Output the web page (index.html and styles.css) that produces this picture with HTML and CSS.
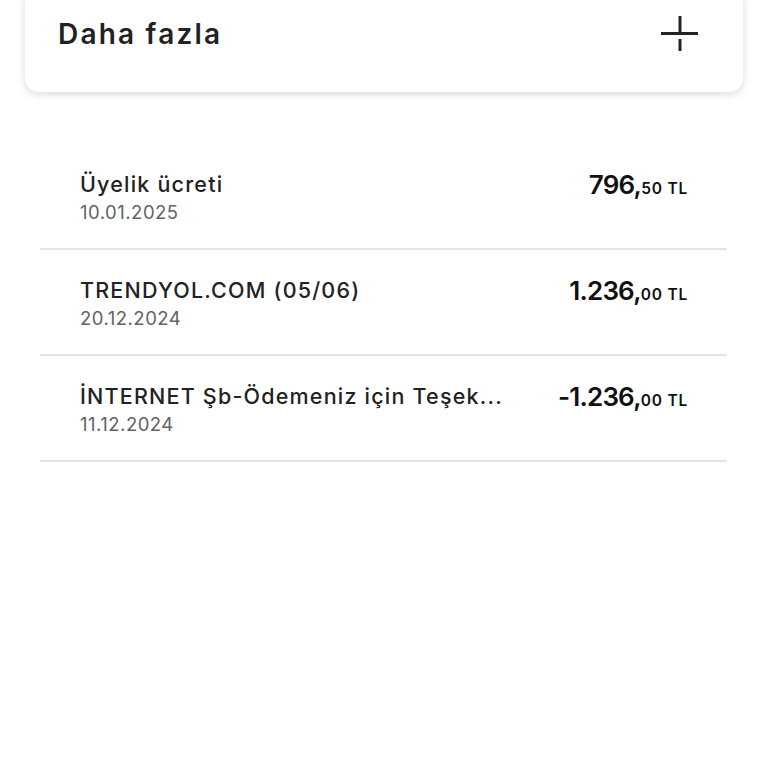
FILE: index.html
```html
<!DOCTYPE html>
<html lang="tr">
<head>
<meta charset="utf-8">
<link rel="stylesheet" href="styles.css">
</head>
<body>
<div class="card">
  <span class="card-title">Daha fazla</span>
  <svg class="plus" width="40" height="40" viewBox="0 0 40 40">
    <path d="M20 0 V16" stroke="#222" stroke-width="3"/>
    <path d="M1 17.5 H38" stroke="#222" stroke-width="3.2"/>
    <path d="M20 23 V35" stroke="#222" stroke-width="3"/>
  </svg>
</div>
<ul class="list">
  <li class="row">
    <div class="info">
      <div class="title">Üyelik ücreti</div>
      <div class="date">10.01.2025</div>
    </div>
    <div class="amount"><span class="int">796,</span><span class="dec">50 TL</span></div>
  </li>
  <li class="row">
    <div class="info">
      <div class="title">TRENDYOL.COM (05/06)</div>
      <div class="date">20.12.2024</div>
    </div>
    <div class="amount"><span class="int">1.236,</span><span class="dec">00 TL</span></div>
  </li>
  <li class="row">
    <div class="info">
      <div class="title">İNTERNET Şb-Ödemeniz için Teşek...</div>
      <div class="date">11.12.2024</div>
    </div>
    <div class="amount"><span class="int">-1.236,</span><span class="dec">00 TL</span></div>
  </li>
</ul>
</body>
</html>
```
FILE: styles.css
```css
html, body {
  margin: 0;
  padding: 0;
  background: #fff;
  font-family: Inter, "Noto Sans", sans-serif;
  color: #1e1e1e;
}
.card {
  margin: -20px 25px 0;
  height: 112px;
  box-sizing: border-box;
  padding: 20px 43px 24px 33px;
  background: #fff;
  border-radius: 14px;
  box-shadow: 0 2px 8px rgba(0, 0, 0, 0.16);
  display: flex;
  align-items: center;
  justify-content: space-between;
}
.card-title {
  font-size: 28px;
  font-weight: 600;
  letter-spacing: 2.2px;
  color: #222;
}
.plus {
  display: block;
  margin-top: 3px;
}
.list {
  list-style: none;
  margin: 52px 41px 0 40px;
  padding: 0;
}
.row {
  height: 106px;
  box-sizing: border-box;
  border-bottom: 2px solid #e4e4e4;
  display: flex;
  align-items: center;
  justify-content: space-between;
  padding: 2px 39px 0 40px;
}
.title {
  font-size: 21.5px;
  font-weight: 500;
  letter-spacing: 1.2px;
  color: #222;
  line-height: 27px;
}
.date {
  font-size: 18.5px;
  letter-spacing: 0.5px;
  color: #636363;
  line-height: 23px;
  margin-top: 3px;
}
.amount {
  align-self: flex-start;
  margin-top: 23px;
  white-space: nowrap;
}
.int {
  font-size: 26px;
  font-weight: 600;
  color: #111;
  letter-spacing: -0.8px;
}
.dec {
  font-size: 15.5px;
  font-weight: 600;
  letter-spacing: 0.8px;
  color: #111;
}
```
